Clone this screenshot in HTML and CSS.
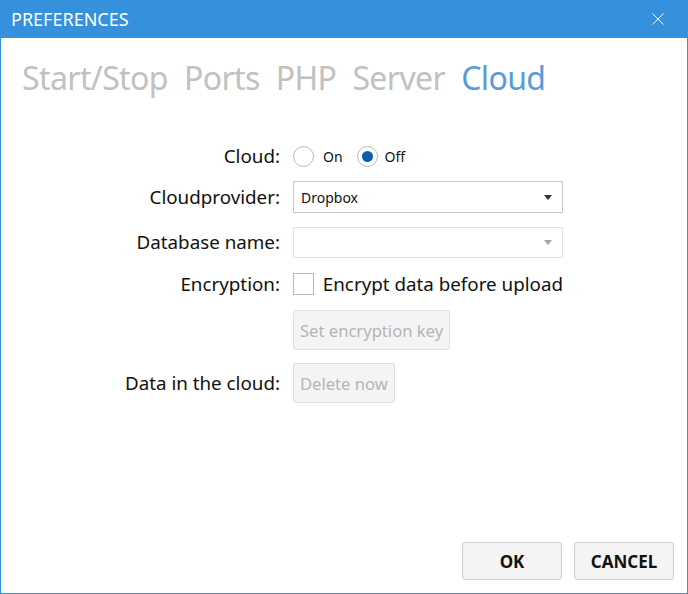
FILE: index.html
```html
<!DOCTYPE html>
<html lang="en">
  <head>
    <meta charset="UTF-8" />
    <title>Preferences</title>
    <link rel="stylesheet" href="styles.css">
  </head>
  <body>
    <div class="window">
      <div class="titlebar">
        <span class="title">PREFERENCES</span>
        <svg class="close" width="12" height="12" viewBox="0 0 12 12">
          <path d="M0.5 0.5 L11.5 11.5 M11.5 0.5 L0.5 11.5" stroke="#fff" stroke-width="1" fill="none" />
        </svg>
      </div>

      <div class="tabs">
        <span class="tab">Start/Stop</span>
        <span class="tab">Ports</span>
        <span class="tab">PHP</span>
        <span class="tab">Server</span>
        <span class="tab active">Cloud</span>
      </div>

      <div class="form">
        <label class="row-label r-cloud">Cloud:</label>
        <div class="radios r-cloud">
          <span class="radio"></span><span class="radio-text">On</span>
          <span class="radio checked"></span><span class="radio-text">Off</span>
        </div>

        <label class="row-label r-provider">Cloudprovider:</label>
        <div class="combo r-provider">
          <span>Dropbox</span>
          <span class="arrow"></span>
        </div>

        <label class="row-label r-db">Database name:</label>
        <div class="combo disabled r-db">
          <span></span>
          <span class="arrow"></span>
        </div>

        <label class="row-label r-enc">Encryption:</label>
        <div class="check r-enc">
          <span class="box"></span>
          <span>Encrypt data before upload</span>
        </div>

        <div class="r-key"><button class="btn-off">Set encryption key</button></div>

        <label class="row-label r-data">Data in the cloud:</label>
        <div class="r-data"><button class="btn-off">Delete now</button></div>
      </div>

      <div class="footer">
        <button class="btn">OK</button>
        <button class="btn">CANCEL</button>
      </div>
    </div>
  </body>
</html>
```

FILE: styles.css
```css
* {
  margin: 0;
  padding: 0;
  box-sizing: border-box;
  font-family: "Noto Sans", "Open Sans", sans-serif;
}

body {
  background: white;
}

.window {
  width: 688px;
  height: 594px;
  border: 1px solid #3591dc;
  border-top: none;
  display: flex;
  flex-direction: column;
}

.titlebar {
  height: 38px;
  background: #3591dc;
  margin: 0 -1px;
  display: flex;
  align-items: center;
  justify-content: space-between;
  padding: 0 24px 0 11px;
}

.title {
  color: white;
  font-size: 18px;
}

.tabs {
  display: flex;
  gap: 16px;
  padding: 18px 0 0 21px;
  font-size: 32px;
  height: 80px;
}

.tab {
  color: #c1c1c1;
  letter-spacing: -0.6px;
}

.tab.active {
  color: #5b9ad9;
}

.form {
  display: grid;
  grid-template-columns: 279px 270px;
  grid-template-rows: 24px 32px 32px 26px 40px 40px;
  column-gap: 13px;
  row-gap: 13px;
  align-items: center;
  margin-top: 26px;
  font-size: 18.8px;
  color: #111;
}

.row-label {
  text-align: right;
  grid-column: 1;
  white-space: nowrap;
}

.r-cloud { grid-row: 1; }
.r-provider { grid-row: 2; }
.r-db { grid-row: 3; }
.r-enc { grid-row: 4; }
.r-key { grid-row: 5; grid-column: 2; }
.r-data { grid-row: 6; }

.radios {
  display: flex;
  align-items: center;
  font-size: 14px;
}

.radio {
  width: 21px;
  height: 21px;
  border: 1px solid #b8b8b8;
  border-radius: 50%;
  display: flex;
  align-items: center;
  justify-content: center;
}

.radio.checked::after {
  content: "";
  width: 11px;
  height: 11px;
  border-radius: 50%;
  background: #0e5eae;
}

.radio-text {
  margin: 0 14px 0 9px;
}

.radio-text:last-child {
  margin-left: 7px;
}

.combo {
  height: 32px;
  border: 1px solid #c9c9c9;
  display: flex;
  align-items: center;
  justify-content: space-between;
  padding: 0 10px 0 7px;
  font-size: 14px;
}

.combo.disabled {
  height: 31px;
  align-self: end;
  border-color: #e3e3e3;
}

.arrow {
  width: 0;
  height: 0;
  border-left: 4px solid transparent;
  border-right: 4px solid transparent;
  border-top: 5px solid #333;
}

.combo.disabled .arrow {
  border-top-color: #a5a5a5;
}

.check {
  display: flex;
  align-items: center;
  gap: 9px;
  white-space: nowrap;
}

.box {
  width: 22px;
  height: 22px;
  border: 1px solid #b8b8b8;
}

.btn-off {
  height: 40px;
  padding: 0 6px;
  background: #f4f4f4;
  border: 1px solid #e0e0e0;
  border-radius: 3px;
  color: #b4b4b4;
  font-size: 16.6px;
}

.footer {
  margin-top: auto;
  display: flex;
  justify-content: flex-end;
  gap: 12px;
  padding: 0 13px 13px 0;
}

.btn {
  width: 100px;
  height: 38px;
  background: #f4f4f4;
  border: 1px solid #cfcfcf;
  border-radius: 3px;
  font-size: 17px;
  font-weight: bold;
  color: #111;
}
```
